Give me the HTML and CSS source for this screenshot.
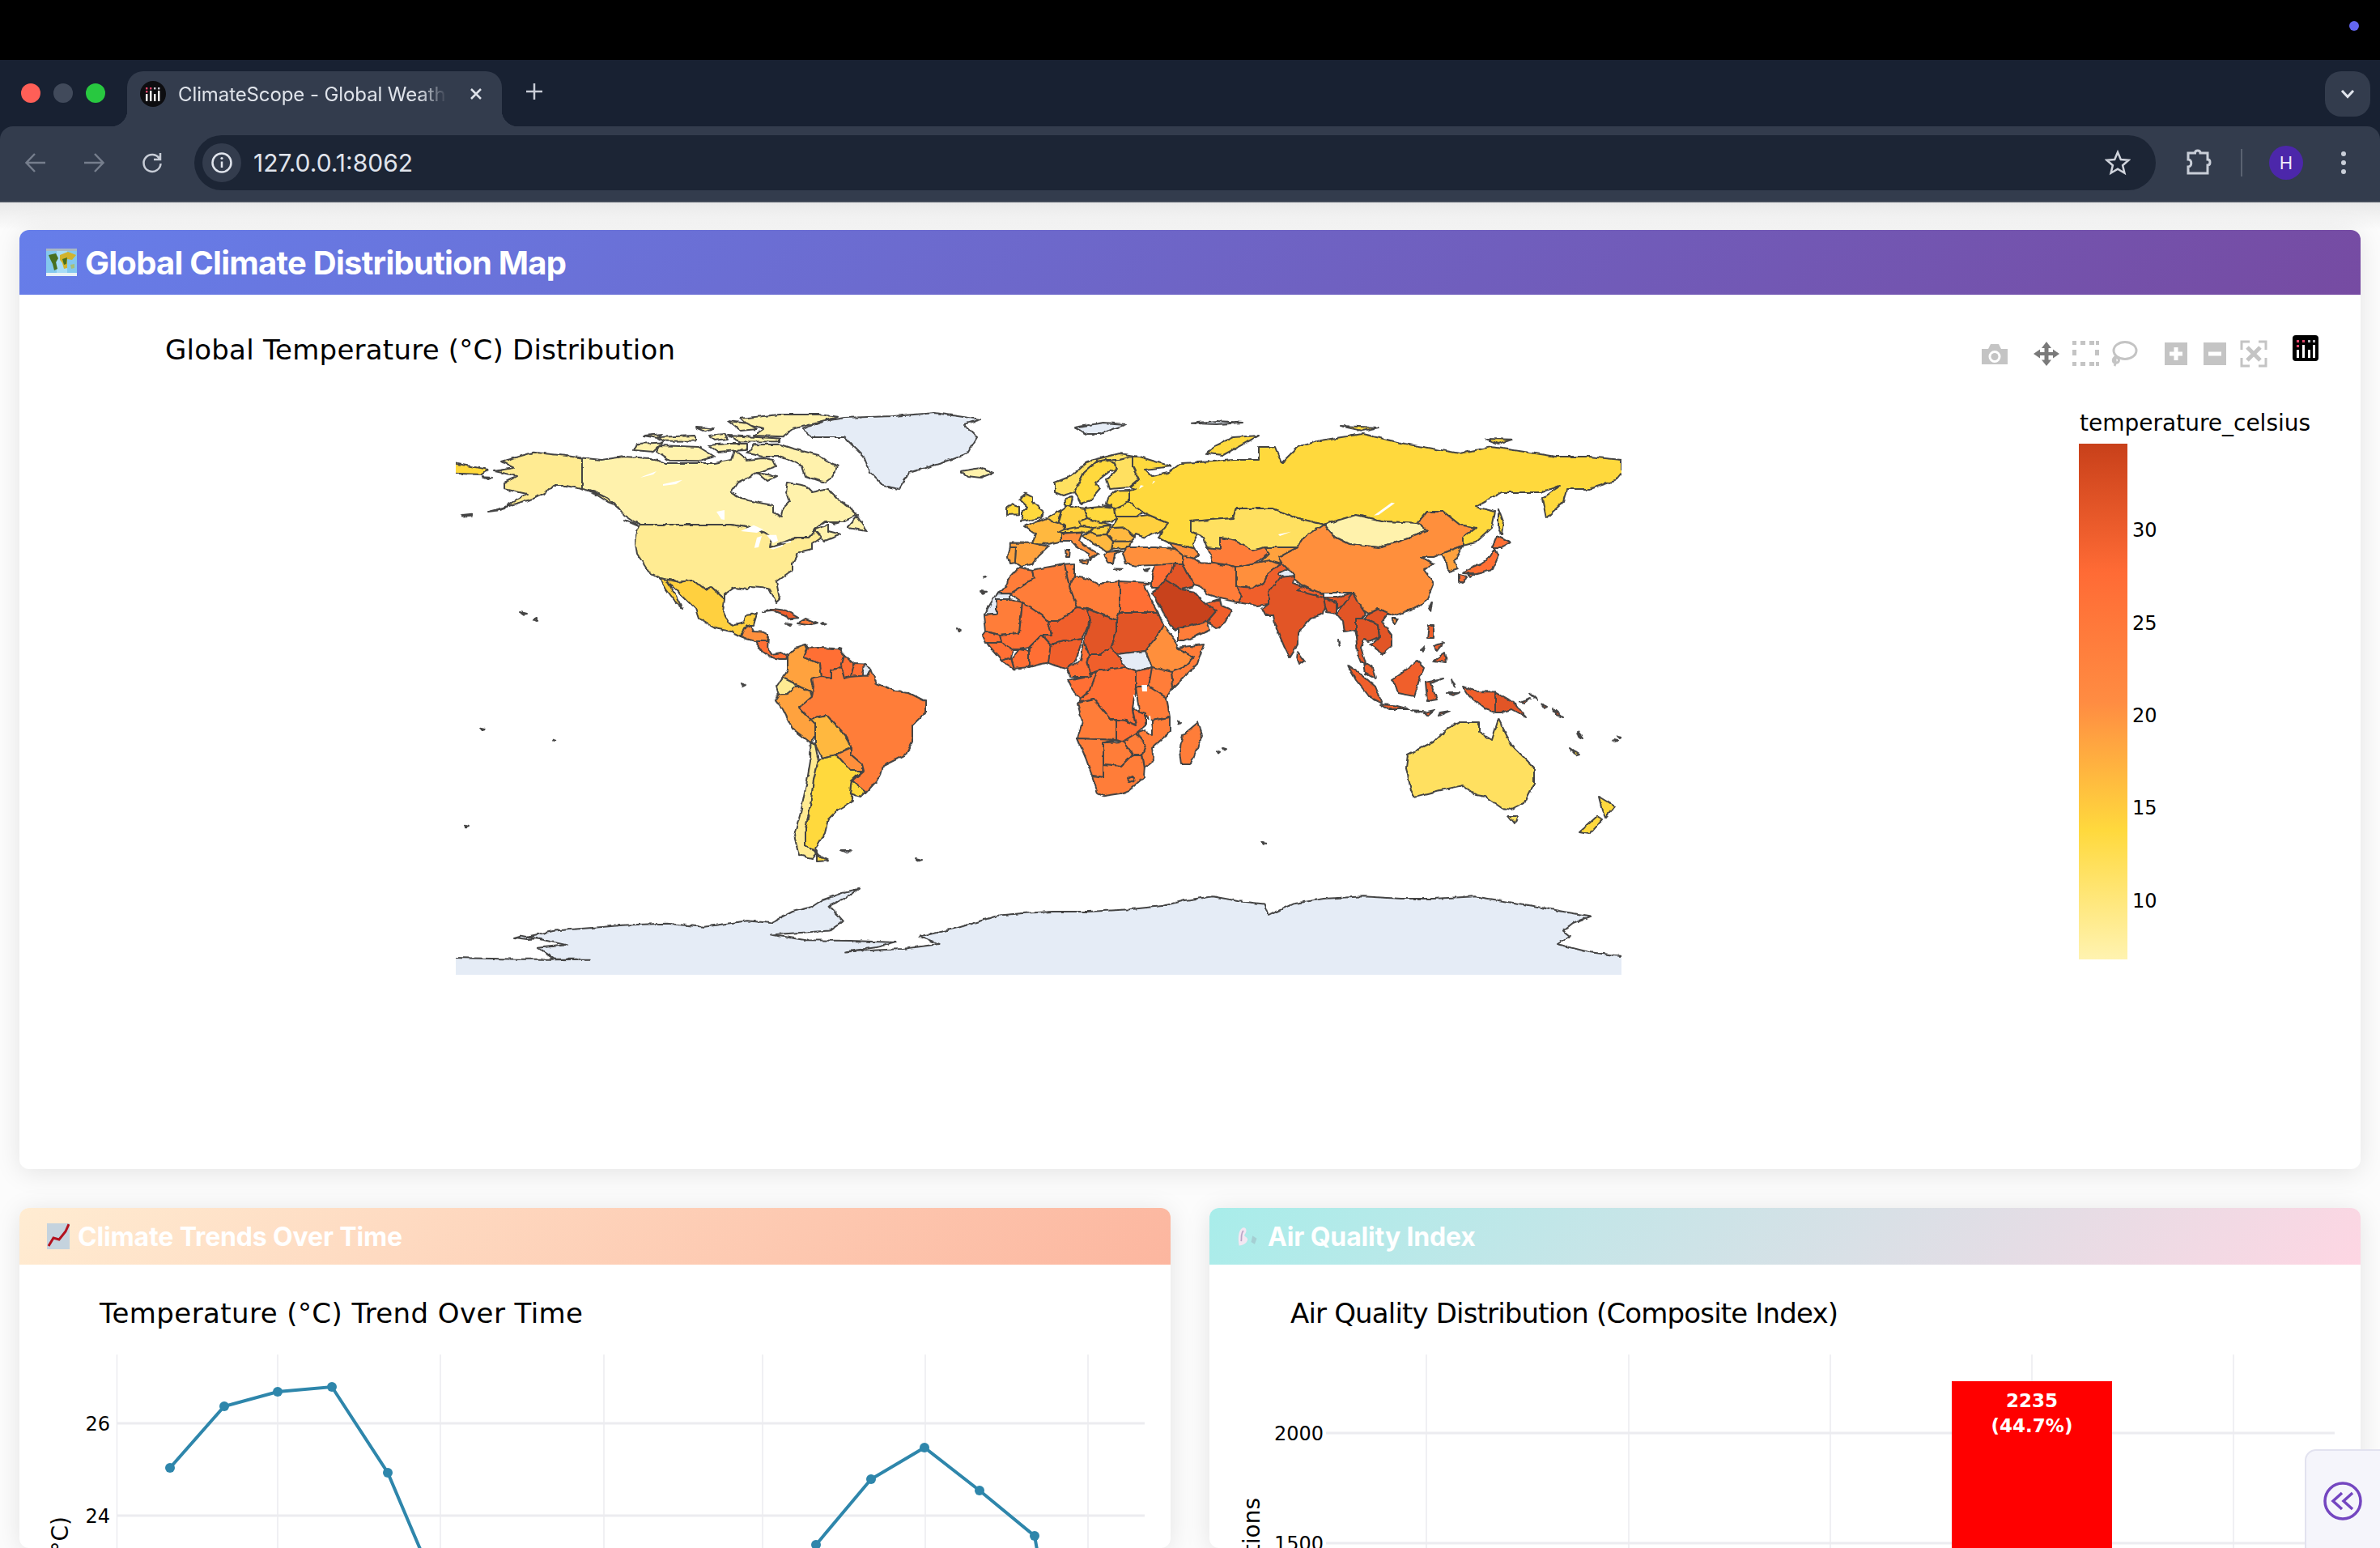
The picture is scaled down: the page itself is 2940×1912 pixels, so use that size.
FILE: index.html
```html
<!DOCTYPE html>
<html lang="en">
<head>
    <meta charset="UTF-8">
    <title>ClimateScope - Global Weather</title>
    <link rel="stylesheet" href="styles.css">
</head>
<body>

    <!-- macOS menu bar -->
    <div class="menubar"><span class="menu-dot"></span></div>

    <div class="browser-top">
        <!-- Browser tabs -->
        <div class="tabstrip">
            <div class="lights">
                <span class="light red"></span>
                <span class="light grey"></span>
                <span class="light green"></span>
            </div>
            <div class="tab">
                <svg class="favicon" viewBox="0 0 32 32">
                    <circle cx="16" cy="16" r="16" fill="#0d0d10"/>
                    <g fill="#e8466c"><rect x="7" y="8" width="2.4" height="2.4"/><rect x="7" y="12" width="2.4" height="2.4"/><rect x="12" y="8" width="2.4" height="2.4"/></g>
                    <g fill="#c9c9d2"><rect x="17" y="8" width="2.4" height="2.4"/><rect x="22" y="8" width="2.4" height="2.4"/></g>
                    <g fill="#fff"><rect x="7" y="16" width="2.4" height="9"/><rect x="12" y="12" width="2.4" height="13"/><rect x="17" y="16" width="2.4" height="9"/><rect x="22" y="12" width="2.4" height="13"/></g>
                </svg>
                <span class="tab-title">ClimateScope - Global Weath</span>
                <svg class="tab-close" viewBox="0 0 16 16"><path d="M2 2 14 14M14 2 2 14"/></svg>
            </div>
            <svg class="new-tab" viewBox="0 0 22 22"><path d="M11 1V21M1 11H21"/></svg>
            <div class="tab-menu">
                <svg viewBox="0 0 18 12"><path d="M2 2 9 9.5 16 2"/></svg>
            </div>
        </div>

        <!-- Browser toolbar -->
        <div class="toolbar">
            <svg class="nav-icon dim" viewBox="0 0 28 28"><path d="M26 14H3M13 3 2.500 14 13 25"/></svg>
            <svg class="nav-icon dim" viewBox="0 0 28 28"><path d="M2 14H25M15 3 25.500 14 15 25"/></svg>
            <svg class="nav-icon" viewBox="0 0 28 28"><path d="M23 9A10.500 10.500 0 1 0 24.500 15M24 2V10H16"/></svg>
            <div class="omnibox">
                <span class="site-chip">
                    <svg viewBox="0 0 28 28"><circle cx="14" cy="14" r="11.500"/><path d="M14 12.500V20"/><circle class="i-dot" cx="14" cy="8.500" r="1.600"/></svg>
                </span>
                <span class="url">127.0.0.1:8062</span>
                <svg class="star" viewBox="0 0 32 32"><path d="M16 3 19.800 12 29.500 12.800 22.100 19.200 24.400 28.700 16 23.600 7.600 28.700 9.900 19.200 2.500 12.800 12.200 12Z"/></svg>
            </div>
            <svg class="puzzle" viewBox="0 0 34 34"><path d="M4 5H12.500C12.500 1 19 1 19 5H28V13C32 13 32 20 28 20V30H4V22C9 22 9 13 4 13Z"/></svg>
            <span class="divider"></span>
            <span class="avatar">H</span>
            <span class="kebab"><i></i><i></i><i></i></span>
        </div>
    </div>

    <div class="page">

        <section class="card">
            <h2 class="card-head head-map">
                <svg class="emoji" viewBox="0 0 40 36">
                    <rect x="1" y="1" width="38" height="34" fill="#84c8ee"/>
                    <rect x="14" y="1" width="13" height="34" fill="#a8dcf6"/>
                    <rect x="1" y="1" width="38" height="3" fill="#a9b9c4"/>
                    <rect x="1" y="31" width="38" height="4" fill="#e9f1f5"/>
                    <path d="M4 9 13 7 16 13 13 18 15 26 11 28 9 20 6 14Z" fill="#48701f"/>
                    <path d="M18 9 28 5 38 9 33 15 27 14 27 25 23 26 21 19 18 15Z" fill="#d2b32c"/>
                    <path d="M21 14 27 12 26 20 23 21Z" fill="#48701f"/>
                    <path d="M31 21 36 20 36 25 32 26Z" fill="#a8bf78"/>
                </svg>
                Global Climate Distribution Map
            </h2>
            <svg class="plot-map" viewBox="24 364 2892 1080">
                <text class="plot-title" x="204" y="444" textLength="630">Global Temperature (°C) Distribution</text>

                <!-- Plotly mode bar -->
                <g class="mode-off">
                    <path d="M2448 431H2456L2459 425H2469L2472 431H2480V450H2448ZM2464 433A7.500 7.500 0 1 0 2464 448A7.500 7.500 0 1 0 2464 433Z" fill-rule="evenodd"/>
                    <circle cx="2464" cy="440.500" r="4.500"/>
                </g>
                <path class="mode-on" d="M2528 422 2534 430H2530.500V435H2536V431.500L2544 437 2536 442.500V439H2530.500V444.500H2534L2528 452 2522 444.500H2525.500V439H2520V442.500L2512 437 2520 431.500V435H2525.500V430H2522Z"/>
                <g class="mode-off">
                    <rect x="2560" y="421" width="5" height="5"/><rect x="2570" y="421" width="6" height="5"/><rect x="2581" y="421" width="6" height="5"/><rect x="2589" y="421" width="4" height="5"/>
                    <rect x="2560" y="432" width="5" height="7"/><rect x="2588" y="432" width="5" height="7"/>
                    <rect x="2560" y="447" width="5" height="5"/><rect x="2570" y="447" width="6" height="5"/><rect x="2581" y="447" width="6" height="5"/><rect x="2589" y="447" width="4" height="5"/>
                </g>
                <g class="mode-line">
                    <ellipse cx="2625" cy="433" rx="14" ry="10.500"/>
                    <path d="M2614 440C2608 444 2610 449 2615 448C2619 447 2618 441 2613 442C2612 446 2615 447 2612 452"/>
                </g>
                <path class="mode-off" fill-rule="evenodd" d="M2674 423H2702V451H2674ZM2685.500 429V434.500H2680V439.500H2685.500V445H2690.500V439.500H2696V434.500H2690.500V429Z"/>
                <path class="mode-off" fill-rule="evenodd" d="M2722 423H2750V451H2722ZM2728 434.500V439.500H2744V434.500Z"/>
                <g class="mode-line">
                    <path d="M2769 432V422H2779M2790 422H2799V432M2769 442V452H2779M2790 452H2799V442"/>
                    <path class="mode-thick" d="M2776 429 2792 445M2792 429 2776 445"/>
                </g>
                <rect x="2832" y="414" width="32" height="32" rx="4" fill="#000"/>
                <g fill="#e8466c"><rect x="2837" y="420" width="3" height="3"/><rect x="2837" y="426" width="3" height="3"/><rect x="2844" y="420" width="3" height="3"/></g>
                <g fill="#b9b9c0"><rect x="2851" y="420" width="3" height="3"/><rect x="2857" y="420" width="3" height="3"/></g>
                <g fill="#fff"><rect x="2837" y="432" width="3" height="10"/><rect x="2844" y="426" width="3" height="16"/><rect x="2851" y="432" width="3" height="10"/><rect x="2857" y="426" width="3" height="16"/></g>

                <!-- Choropleth, drawn in lon/lat -->
                <svg x="563" y="504" width="1440" height="700" viewBox="-180 -85 360 175">
                    <defs>
                        <!-- roughens the hand drawn coastlines -->
                        <filter id="coast" filterUnits="userSpaceOnUse" x="-190" y="-95" width="380" height="195" color-interpolation-filters="sRGB">
                            <feTurbulence type="fractalNoise" baseFrequency="0.45" numOctaves="2" seed="4" result="noise"/>
                            <feDisplacementMap in="SourceGraphic" in2="noise" scale="1.1" xChannelSelector="R" yChannelSelector="G"/>
                        </filter>
                    </defs>
                    <g filter="url(#coast)">
                    <g class="geo" transform="scale(1 -1)">
                        <!-- Antarctica and Greenland -->
                        <polygon class="t-none" points="-186,-84.600 -160,-85.200 -138.500,-85.200 -149.400,-85.300 -154.800,-81.700 -145.800,-80.800 -157.900,-78.200 -149.400,-76.400 -138,-75.500 -127.600,-74.600 -115,-74.200 -103.300,-75.200 -90,-73.300 -82.700,-74 -76,-70.500 -70,-69 -67,-67 -60,-64.500 -55.500,-63.400 -60,-66.500 -64.600,-68.700 -60.300,-73.400 -64.600,-76.400 -82.700,-77.600 -71.800,-79.300 -58,-79.500 -44,-80 -50,-81.500 -59.700,-82.900 -42,-82 -30.600,-80.500 -36.700,-78.200 -25,-75.500 -12.500,-71.700 -5,-71 4.300,-70.500 15.400,-70.500 28,-69.800 38.700,-68.700 45,-67 53.800,-65.800 62,-67.300 69.600,-68.100 71,-71.700 78.500,-68.100 88,-66.500 100.400,-65.800 112,-66.500 122,-66.500 134.700,-65.800 145,-67.500 152.500,-68.700 162,-70.500 170.400,-71.900 165,-74 162,-76.400 164,-78 160,-80.500 170,-83 186,-85 186,-98 -186,-98"/>
                        <polygon class="t-none" points="-162,-78.500 -158,-79 -155,-78.800 -160,-77.900"/>
                        <polygon class="t-none" points="-73,78.500 -66,81 -60,82 -45,82.500 -32,83.500 -18,81.500 -23,80 -19,76 -22,71 -30,68 -40,65 -43,60 -48,61 -52,65 -54,70 -60,76 -70,76"/>
                        <polygon class="t-none" points="11,79 20,80.500 27,80 19,77 15,77"/>
                        <polygon class="t-none" points="47,80.300 55,81 63,80.500 55,80"/>

                        <!-- North America -->
                        <polygon class="t1" points="-141,69.600 -135,69 -128,70 -120,69.500 -115,68 -108,68 -100,68 -95,69 -94,72 -90,69 -85,69.500 -82,69 -81,67 -87,65 -93,62 -95,59 -92,57 -85,55.500 -82,55 -82,52.500 -79.500,51.500 -79,54 -77,56 -78,59 -77.500,62 -72,61 -70,59 -65,60 -62,57 -58,54 -56,52 -60,50 -66,50 -70,47 -65,49 -65,47 -61,46 -66,44 -67,45 -69,47.300 -71,45 -75,45 -79,43.500 -83,42 -82.500,45 -84.500,46.500 -89,48 -95,49 -123,49 -125,50 -128,52 -130,54.500 -133,57 -137,59 -141,60"/>
                        <polygon class="t1" points="-118,71.500 -117,73.500 -105,73 -100,70 -105,68.700 -114,68.800"/>
                        <polygon class="t1" points="-62,67 -66,69 -68,70.500 -76,72.500 -80,73.800 -88,73.700 -90,71 -85,70 -80,70 -77,69 -73,67 -72,64 -66,62 -64,63.500"/>
                        <polygon class="t1" points="-62,82.300 -68,83 -80,83 -92,81.800 -90,80 -85,78.500 -88,76.500 -79,76.200 -76,78.500 -66,81"/>
                        <polygon class="t1" points="-125,72 -124,74 -116,74.400 -119,71.500"/>
                        <polygon class="t1" points="-96,76.500 -80,75.600 -80,74.700 -92,74.600"/>
                        <polygon class="t1" points="-118,76 -106,76.500 -106,74.900 -116,74.800"/>
                        <polygon class="t1" points="-96,81 -90,80.300 -87,78.500 -92,78"/>
                        <polygon class="t1" points="-102,76.500 -97,77 -96,75.500 -100,75"/>
                        <polygon class="t1" points="-122,76.500 -116,77 -118,75.800"/>
                        <polygon class="t1" points="-106,79 -100,78.700 -103,77.700"/>
                        <polygon class="t1" points="-102,73.500 -96,74 -90,74 -90,72 -95,71.800 -99,71.500"/>
                        <polygon class="t1" points="-87,65 -81,64 -84,62.500"/>
                        <polygon class="t1" points="-59,48 -56,51.500 -53,47"/>
                        <polygon class="t1" points="-128,50.500 -123.500,48.500 -125,49.500"/>
                        <polygon class="t1" points="-64.500,49.900 -62,49.600 -63,49.300"/>
                        <polygon class="t2" points="-141,69.600 -148,70.500 -156,71.300 -166,68.500 -162,66.500 -168,65.500 -161,64 -165,62 -165,60 -158,58.500 -165,54.500 -156,57 -152,59 -150,61 -146,61 -141,60 -137,58.500 -133,56 -130.500,55 -133,57 -137,59 -141,60"/>
                        <polygon class="t2" points="-170,53 -166,54 -163,55 -166,53.500"/>
                        <polygon class="t2" points="-178,52 -175,52.300 -175,51.800 -178,51.600"/>
                        <polygon class="t2" points="-172,63.700 -169,63.500 -170,63"/>
                        <polygon class="t2" points="-155,20 -155,19 -156,19.500"/>
                        <polygon class="t2" points="-160,22 -158,21.500 -159,21.300"/>
                        <polygon class="t2" points="-123,49 -95,49 -89,48 -84.500,46.500 -82.500,45 -83,42 -79,43 -75,45 -71,45 -69,47.300 -67,45 -70,43 -70,41.500 -74,40.500 -76,37 -76,35 -81,31.500 -80,26 -81,25 -83,29 -85,29.700 -89,30 -90,29 -94,29.500 -97,27.500 -97,26 -101,29.700 -103,29 -106.500,31.800 -111,31.300 -117,32.500 -120.500,34.500 -124,40 -124.500,43 -124,47"/>
                        <polygon class="t5" points="-117,32.500 -111,31.300 -106.500,31.800 -103,29 -101,29.700 -97,26 -97.500,22 -96,19 -94,18 -91,18.700 -90.500,21 -87,21.500 -88,18 -89,18 -91,17 -92,14.500 -95,16 -100,17 -105,20 -106,23 -109,26 -112.500,29.500 -114.700,31.500 -112,27 -110,23 -112,25 -115,29"/>
                        <polygon class="t8" points="-92,14.500 -91,17 -89,18 -88,16 -85,15.800 -83.500,15 -84,13 -87.500,13 -90,13.700"/>
                        <polygon class="t10" points="-87.500,13 -84,13 -83.500,15 -83.700,11 -82.500,9 -79.500,9.500 -77.500,8.500 -78,7.500 -80,7.500 -83,8.200 -85.500,10"/>
                        <polygon class="t11" points="-85,22 -82,23 -78,22.500 -74.200,20.200 -77.500,19.900 -78,20.700 -82,22.300"/>
                        <polygon class="t9" points="-74.500,18.500 -72,20 -68.500,18.700 -71,18"/>
                        <polygon class="t8" points="-78.300,18.400 -76.300,18.200 -77,17.700"/>
                        <polygon class="t8" points="-67.200,18.500 -65.600,18.300 -66.500,18"/>
                        <polygon class="t8" points="-61.800,11 -60.800,10.700 -61.500,10"/>

                        <!-- South America -->
                        <polygon class="t7" points="-77.500,8.500 -75,11 -72,12 -71.300,11 -72.500,8 -70,7 -67.500,6 -67,2 -70,1.500 -69.500,-1 -70,-4.200 -70.500,-2.500 -74,-1 -75.500,0 -79,1.700 -77.500,4"/>
                        <polygon class="t10" points="-72,12 -71.500,10.800 -68,11 -62,10.700 -60,8.500 -61,5 -64,4 -64,1.500 -67,2 -67.500,6 -70,7 -72.500,8 -71.300,11"/>
                        <polygon class="t10" points="-60,8.500 -57,6 -58,2 -60,1.500 -61,5"/>
                        <polygon class="t10" points="-57,6 -54,5.900 -54.500,2.300 -58,2"/>
                        <polygon class="t-none" points="-54,5.900 -51.700,4.300 -52.700,2.300 -54.500,2.300"/>
                        <polygon class="t2" points="-79,1.700 -75.500,0 -75.200,-1 -78,-3.300 -80.300,-3.400 -81,-1"/>
                        <polygon class="t7" points="-80.300,-3.400 -78,-3.300 -75.200,-1 -74,-1 -70.500,-2.500 -70,-4.200 -73,-7 -73,-9 -70.500,-9.500 -69,-12.500 -69,-16 -70.400,-18.300 -76,-14 -79,-8 -81.300,-5"/>
                        <polygon class="t9" points="-51.700,4.300 -50,0 -44,-2.500 -40,-3 -35,-5.500 -35,-9 -39,-13 -39,-18 -41,-22 -48,-25.500 -49,-29 -53.500,-34 -57.500,-30 -54,-27 -54.500,-25 -58,-22 -58,-19.500 -60,-16 -65.300,-10 -70.500,-11 -74,-7.500 -70,-4.200 -69.500,-1 -70,1.500 -67,2 -64,1.500 -64,4 -61,5 -60,1.500 -58,2 -54.500,2.300 -52.700,2.300"/>
                        <polygon class="t6" points="-69,-12.500 -70.500,-11 -65.300,-10 -60,-16 -58,-19.500 -58,-20 -62.500,-22 -67,-23 -69,-19 -69,-16"/>
                        <polygon class="t8" points="-58,-20 -62.500,-22 -58,-27 -54.500,-27 -54.500,-25 -58,-22"/>
                        <polygon class="t4" points="-57.800,-30.200 -53.500,-33.500 -55,-35 -58.300,-34"/>
                        <polygon class="t2" points="-70.400,-18.300 -69,-19 -68,-24 -69.500,-30 -70.500,-38 -72,-45 -72,-50 -68.500,-52.300 -70,-54 -74,-53 -75.500,-47 -73.500,-40 -71.500,-30 -70.500,-24"/>
                        <polygon class="t4" points="-67,-23 -62.500,-22 -58,-27 -54.500,-27 -57.800,-30.200 -58.300,-34 -57,-36 -62,-39 -65,-42 -66,-46 -69,-51 -68.500,-52.300 -72,-50 -72,-45 -70.500,-38 -69.500,-30 -68,-24"/>
                        <polygon class="t4" points="-68.500,-52.700 -65,-54.800 -68.500,-55"/>
                        <polygon class="t-none" points="-61,-51.500 -58,-51.500 -59,-52.300"/>
                        <polygon class="t-none" points="-38,-54 -36,-54.500 -37,-54.800"/>
                        <polygon class="t-none" points="-92,0 -90.500,-.5 -91.500,-1"/>

                        <!-- Europe -->
                        <polygon class="t1" points="-24,65.500 -18,66.500 -14,65 -18,63.500 -22,64"/>
                        <polygon class="t4" points="-5.500,50 1,51 1.500,53 -2,56 -2,57.500 -4,58.600 -6,57 -3.500,54.500 -5,53 -5,51.700"/>
                        <polygon class="t4" points="-10,52 -6,52.200 -6,54.500 -8,55.200 -10,54"/>
                        <polygon class="t3" points="5,59 7.500,58 11,59 12,61 14,65 18,68.500 25,69 31,70 25,71 15,68.500 10,64 5,62"/>
                        <polygon class="t4" points="11,59 13,55.500 16,56.500 19,60 17.500,62 22,65.500 24,66 23.500,68 20.500,69 18,68.500 14,65 12,61"/>
                        <polygon class="t3" points="22,60 28,60.500 31,63 29,67 29,70 25,69 20.500,69 23.500,68 24,66 21,63"/>
                        <polygon class="t4" points="8.200,55 8.200,57 10.500,57.500 10,55"/>
                        <polygon class="t7" points="-8.800,43.400 -2,43.300 3,42.300 0,39.500 -2,36.800 -5.500,36 -7.300,37.200 -7,42 -8.800,42"/>
                        <polygon class="t7" points="-8.800,42 -7,42 -7.300,37.200 -9,37 -9.500,39"/>
                        <polygon class="t6" points="-4.500,48.500 2.500,51 8,49 7.500,44 3,43 -2,43.300 -1,46"/>
                        <polygon class="t5" points="2.500,51 4,52 7,53.500 6,50 6,49.500 4,50"/>
                        <polygon class="t5" points="7,53.500 9,55 14,54 15,51 12.500,48 8,47.500 8,49 6,50"/>
                        <polygon class="t4" points="14,54 19,54.500 23.500,54 24,50.500 19,49.300 15,51"/>
                        <polygon class="t5" points="12.500,50 15,51 19,49.500 22.500,49 18,47.800 13,48.600"/>
                        <polygon class="t5" points="6,46.500 8,47.500 13,48.500 17,48 16,46.700 10,46.500"/>
                        <polygon class="t8" points="7,44 7,46 13.500,46.500 12.500,44 16,41.500 18.500,40 16.500,39 16,38 15.500,40 12,42 10,44"/>
                        <polygon class="t8" points="12.500,38 15.500,38.200 15,36.800"/>
                        <polygon class="t8" points="8.300,41 9.700,41 9.500,39 8.500,39"/>
                        <polygon class="t5" points="16,46.700 17,48 22,48.500 21,46 18,45.800"/>
                        <polygon class="t6" points="21,46 22.500,48 26.500,48.200 29.700,45 28.500,43.800 23,43.800"/>
                        <polygon class="t6" points="23,43.800 28.500,43.800 28,42 22.500,41.300"/>
                        <polygon class="t6" points="13.500,45.500 16,46.700 18,45.800 21,46 23,43.800 22.500,41.300 21,40.500 19.500,41.700 16,43.500"/>
                        <polygon class="t8" points="20,39.700 21,40.500 26,41 23.500,40 23,37 21.500,37"/>
                        <polygon class="t8" points="23.500,35.400 26,35.300 24.500,34.900"/>
                        <polygon class="t8" points="32.500,35 34.500,35.500 33.500,34.600"/>
                        <polygon class="t5" points="24,51.500 30,51.500 34,52 40,49.500 38,47 35,46 33,45 30,46 29.700,45.300 26.500,48.200 22.500,48 24,50.500"/>
                        <polygon class="t4" points="23.500,54 28,56 32,53 30,51.500 24,51.500"/>
                        <polygon class="t4" points="21,55.500 21.500,57.500 24,59.400 28,59.500 28,56 23.500,54"/>

                        <!-- Russia -->
                        <polygon class="t4" points="28,59.500 30,60 28.500,60.500 31,63 29,67 29,70 31,70 41,67 33,66 35,64 40,65 44,68 54,68.500 60,69 68,69 68,73 73,73 75,68 80,73 87,75 100,77 113,74 130,71 140,73 160,70 170,70 180,69 180,65 178,62.500 170,60 163,60 162,56 156.700,51 155.500,57 161,61 155,59 143,59 135,54.500 141,53 140,48 135,43.500 131,42.500 131,45 135,48 130,49 125,53 120,53 117,49.500 107,50 98,52 88,49 80,51 72,54 61,54 60,51 47,50 47,47 49,46 47.500,43 48,41.700 40,43.500 37,45 38,47 40,49.500 34,52 32,53 28,56"/>
                        <polygon class="t4" points="-186,69 -170,66 -172,64.500 -186,65"/>
                        <polygon class="t4" points="52,71 57,70.500 68,76.500 60,76 54,73"/>
                        <polygon class="t4" points="142,54 143.500,50 143,46 142,48"/>
                        <polygon class="t4" points="93,79.500 105,79 100,78"/>
                        <polygon class="t4" points="138,75.500 146,75.300 142,74"/>
                        <polygon class="t4" points="20,54.900 22.500,55 22,54.400"/>

                        <!-- Middle East and Asia -->
                        <polygon class="t3" points="47,50 60,51 61,54 72,54 80,51 88,49 82,45 80,42 70,42 66,41 61,44 56,45 56,41.500 52,42 51,45 49,46 47,47"/>
                        <polygon class="t1" points="88,49 98,52 107,50 117,49.500 120,47 112,44 105,42 96,43 91,45.500"/>
                        <polygon class="t8" points="74,39 80,42 82,45 88,49 91,45.500 96,43 105,42 112,44 120,47 117,49.500 120,53 125,53 130,49 135,48 131,45 131,42.500 124.500,40 122,39 118,39 122,37 119,35 122,31 120,26 117,23.500 110,21 108,21.700 105,23 102,21.500 98,24 97,28 92,28 86,28 81,30.500 78,33 75,36"/>
                        <polygon class="t8" points="109,20 111,20 110,18.300"/>
                        <polygon class="t7" points="124.500,40 131,42.500 128.500,38 129.500,35.500 126.500,34.500 126,37"/>
                        <polygon class="t10" points="131,34 135,33.700 140,35 142,39.500 141,41.500 139.500,39 136.500,37 133,35.500"/>
                        <polygon class="t10" points="140,42 141.500,45.500 145.500,43.500 143,42"/>
                        <polygon class="t10" points="130,33.500 132,33 131,31 130,31.500"/>
                        <polygon class="t10" points="132.500,34 134.500,34 133,33"/>
                        <polygon class="t10" points="120.500,23 121.500,25 121,22"/>
                        <polygon class="t9" points="52,42 56,41.500 56,45 61,44 66,41 70,42 71,40 67,37.200 61,36 53.800,37.300 53,40"/>
                        <polygon class="t7" points="70,42 80,42 74,39 75,37 68,37 71,40"/>
                        <polygon class="t8" points="40,43.500 48,41.700 49.500,40 48,38.500 44.500,39.500 42,41.500"/>
                        <polygon class="t8" points="26,40 27,42 36,42 42,41.500 44.500,39.500 44.500,37 36,36.500 30,36.300 27,37"/>
                        <polygon class="t9" points="44.500,39.500 48,38.500 50,37.200 54,37 61,36 61,31 63,27 61.500,25 57,26 52,27.500 50,30 48,30.500 46,34 44.500,37"/>
                        <polygon class="t12" points="42,37 44.500,37 46,34 48,30.500 47.500,29.800 44,29 39,32 41,34.500"/>
                        <polygon class="t10" points="36,36.500 42,37 41,34.500 39,32 37,29.500 35,29.500 35,33"/>
                        <polygon class="t13" points="35,28 37,29.500 39,32 44,29 48,28.300 50,26 51.500,24.500 55,22.500 52,19 46,17.500 43,17 42,16.500 39,21 36.500,25.500"/>
                        <polygon class="t11" points="51.500,24.500 56,25.800 56.500,24 59.800,22.500 57.500,18.800 55,17 52,19 55,22.500"/>
                        <polygon class="t9" points="43,13 43,17 46,17.500 52,19 53,16.500 45,13"/>
                        <polygon class="t8" points="61,36 67,37.200 71.500,38 75,37 71,34 69.500,31 66,29.500 61,30"/>
                        <polygon class="t11" points="61,30 66,29.500 69.500,31 71,34 75,37 77,35 74.500,32 71,28 71,24.500 67.500,24 61.500,25 63,27"/>
                        <polygon class="t-none" points="74,34 77,35.500 79,33 76,32.200"/>
                        <polygon class="t12" points="74.500,32.500 79,33 78.500,31 81,30 88,26.500 92,26.500 97,28 94,24 92,23 92,25 89,26 88,21.500 84,20 80,15.500 80,12 77.500,8 76,11 73,18 72.500,21 70,21 69,23 71,24.500 71,28"/>
                        <polygon class="t11" points="81,30 88,27.700 88,26.500 80,28.500"/>
                        <polygon class="t12" points="88,26 92,25 92,21.500 89,22"/>
                        <polygon class="t11" points="80,9.700 82,7 80.500,6 79.800,8"/>
                        <polygon class="t12" points="92,21.500 94,24 97,28 98.500,25 101,21.500 98,18 98.500,12 97.500,16.500 94.500,16 94,19"/>
                        <polygon class="t12" points="98,20 100.500,20 105,18 105.500,14.500 102,13 100.500,13.500 99.500,11 101,6.500 99.500,6.500 98.500,9 98,15"/>
                        <polygon class="t12" points="102,21.500 105,23 108,21.700 106,19 109,15 109,11.500 106,9 105,10.300 102.500,12 105.500,14.500 105,18 100.500,20"/>
                        <polygon class="t11" points="100.500,6.500 103,5 104,1.500 101,3"/>
                        <polygon class="t11" points="109,1 112,3 117,7 119,5 117.500,1 116,-4 111,-3 110,0"/>
                        <polygon class="t11" points="95.500,5.500 100,2.500 104,-1 106,-6 102,-4 98,1"/>
                        <polygon class="t11" points="105.500,-6.500 110,-6.800 114.500,-8 108,-8"/>
                        <polygon class="t11" points="115,-8.300 119,-8.500 117,-9"/>
                        <polygon class="t11" points="119,-9 122,-8.300 120,-10"/>
                        <polygon class="t11" points="119.500,0.500 125,1.500 121,0 123,-5 120,-5.500"/>
                        <polygon class="t11" points="123.500,-10 127,-8.500 124,-9"/>
                        <polygon class="t11" points="127.500,1.500 128.500,-1 128,-.5"/>
                        <polygon class="t11" points="126,-3 130,-3 128,-3.700"/>
                        <polygon class="t11" points="131,-1 135,-2.500 141,-2.600 141,-9 138,-8 133,-4"/>
                        <polygon class="t12" points="141,-2.600 147,-6 150.500,-10.500 146,-8 143,-9 141,-9"/>
                        <polygon class="t12" points="148.500,-5.700 152,-4.500 150,-6"/>
                        <polygon class="t12" points="153,-4 154,-5 151.500,-3"/>
                        <polygon class="t12" points="155,-6.500 157,-7.500 156,-8"/>
                        <polygon class="t12" points="159,-8 162,-10.500 160,-9.800"/>
                        <polygon class="t11" points="120.500,18 122,18 122,14 120,14"/>
                        <polygon class="t11" points="122,7 125.500,9.500 126,6.500"/>
                        <polygon class="t11" points="122,11.500 125,12.500 123,10"/>
                        <polygon class="t11" points="118,10 119,11.500 118.500,9.800"/>
                        <polygon class="t3" points="114,-22 122,-18 126,-14 130,-12 136,-12 136,-15 140,-17.500 142,-11 146,-19 153,-26 153,-31 150,-37 146,-39 143,-38.500 138,-35 135,-34.500 131,-31.500 124,-33 116,-35 115,-33 113.500,-26"/>
                        <polygon class="t3" points="145,-41 148,-41 147,-43.500"/>
                        <polygon class="t4" points="173,-35 178,-38 175,-41.500 174,-39"/>
                        <polygon class="t4" points="172.500,-41 174,-42 170,-46.500 167,-46"/>
                        <polygon class="t4" points="164,-20 167,-22 166,-22.300"/>
                        <polygon class="t4" points="166.500,-15 168,-17 167,-16.500"/>
                        <polygon class="t4" points="177.500,-17.500 179,-17.800 178,-18.200"/>
                        <polygon class="t4" points="179,-16.500 180,-16.700 179.500,-17"/>

                        <!-- Africa -->
                        <polygon class="t9" points="-13,27.700 -8.700,27.700 -5,30 -1.500,32.500 -2,35 -6,35.800 -9.500,32 -10,29.500"/>
                        <polygon class="t-none" points="-17,21 -13,21.300 -13,26 -8.700,26 -8.700,27.700 -13,27.700"/>
                        <polygon class="t9" points="-17,21 -13,21.300 -13,26 -8.700,26 -5,25 -6,15.500 -12,15 -16.500,16"/>
                        <polygon class="t9" points="-8.700,27.700 -5,25 1,21 3,19 6,19 12,23.500 9.500,30 8,36.800 -2,35 -1.500,32.500 -5,30"/>
                        <polygon class="t9" points="8,36.800 11,37 11,33 9.500,30"/>
                        <polygon class="t9" points="9.500,30 12,23.500 15,23 24,19.500 25,22 25,31.500 20,31 19,30.300 15,32.300 11,33"/>
                        <polygon class="t10" points="25,22 36.800,22 34,27 32.500,30 34.500,31 25,31.500"/>
                        <polygon class="t10" points="-12,15 -6,15.500 -5,25 1,21 3,19 4,15 1,15 -3,11 -6,10.500 -8,10.500 -11.500,12.500"/>
                        <polygon class="t11" points="3,19 6,19 12,23.500 15,23 16,19.500 13.500,13.700 8,13 3.700,12 1,15 4,15"/>
                        <polygon class="t12" points="15,23 24,19.500 24,16 22.500,11 19,9 15.500,9 14,13 16,19.500"/>
                        <polygon class="t12" points="24,19.500 25,22 36.800,22 38.500,18 36.500,14.500 33,10 24,9 22.500,11 24,16"/>
                        <polygon class="t-none" points="24,9 33,10 35,5 30,3.700 26,5"/>
                        <polygon class="t8" points="36.500,14.500 38.500,18 43,12 42.500,11 48,8 45,5 41.500,3.500 39,3.500 35,5 33,10"/>
                        <polygon class="t9" points="42.500,11 51,12 49,6 41.500,-1.500 41,3.500 45,5 48,8"/>
                        <polygon class="t9" points="35,5 41,3.500 41.500,-1.500 39.500,-4.500 34,-1 34.500,4"/>
                        <polygon class="t10" points="30,3.700 35,5 34,-1 30,-1"/>
                        <polygon class="t9" points="30,-1 34,-1 39.500,-4.500 40.500,-10.500 35,-11.500 31,-8.500"/>
                        <polygon class="t10" points="12.500,-6 17,-5 22,-11 27,-11.500 30,-13 29,-8 30,-1 30,3.700 26,5 19,4 17,3.500 16,-2 13,-4.700"/>
                        <polygon class="t11" points="15,7 15.500,9 19,9 22.500,11 24,9 27,5 19,4 16,3"/>
                        <polygon class="t10" points="9,1 14,2 16,3 18,3.500 16,-2 13,-4.700 11,-3"/>
                        <polygon class="t10" points="8.500,4.500 13,7 14,13 15.500,9 15,7 16,2 9.800,2"/>
                        <polygon class="t11" points="2.700,6.400 3.700,12 8,13 13.500,13.700 11.500,7 8.500,4.500 5,5.500"/>
                        <polygon class="t10" points="-3,5 1,6 3,6.400 3.700,12 1,15 -3,11"/>
                        <polygon class="t10" points="-8,4.500 -3,5 -3,10 -6,10.500 -8,8"/>
                        <polygon class="t10" points="-11.500,7 -7.500,4.400 -8.500,8"/>
                        <polygon class="t10" points="-15,11 -11.500,7 -8.500,8 -8,10.500 -11.500,12.500 -16,12.500"/>
                        <polygon class="t10" points="-17.500,14.700 -16.500,16 -12,15 -11.500,12.500 -16.500,12.500"/>
                        <polygon class="t9" points="12,-6 12.500,-6 17,-5 22,-11 24,-11 24,-17.500 12,-17 13.500,-12"/>
                        <polygon class="t10" points="22,-11 27,-11.500 30,-13 29,-8 33,-9.500 33,-13 30,-15.500 26,-18 24,-17.500 24,-11"/>
                        <polygon class="t9" points="35,-11.500 40.500,-10.500 40.500,-15 35,-20 35.500,-24 32.700,-26 32,-22 33,-19 30,-15.500 33,-14.500 35,-16"/>
                        <polygon class="t9" points="26,-18 30,-15.500 33,-19 32,-22 29,-22"/>
                        <polygon class="t9" points="20,-18.300 26,-18 29,-22 25.500,-25.500 20,-25"/>
                        <polygon class="t9" points="12,-17 24,-17.500 20,-18.300 20,-29 16.500,-28.500 14.500,-23"/>
                        <polygon class="t9" points="16.500,-28.500 20,-29 20,-25 25.500,-25.500 29,-22 32,-22 32.700,-26 32.500,-29 28,-33 25.500,-34 20,-34.800 18.300,-34"/>
                        <polygon class="t9" points="27.500,-29.500 29,-28.700 29.400,-30 28,-30.500"/>
                        <polygon class="t9" points="49.300,-12 50.500,-16 47,-25 44,-25 43.500,-21 44.500,-16"/>

                        <!-- Small islands -->
                        <polygon class="t9" points="-18,28.500 -16,28.300 -17,27.800"/>
                        <polygon class="t9" points="-17,32.900 -16.200,32.800 -16.800,32.400"/>
                        <polygon class="t9" points="-25,17 -23.800,16.200 -24.500,15.800"/>
                        <polygon class="t9" points="55,-20.800 56,-21.200 55.500,-21.600"/>
                        <polygon class="t9" points="57,-20 58,-20.300 57.500,-20.600"/>
                        <polygon class="t9" points="43,-11.600 44,-12.200 43.500,-12.600"/>
                        <polygon class="t9" points="92.500,13.500 93,11.500 92.700,12"/>
                        <polygon class="t-none" points="68.800,-49 70.300,-49.200 69.500,-49.700"/>
                        <polygon class="t-none" points="-172.500,-13.700 -171,-14 -172,-14.300"/>
                        <polygon class="t-none" points="-150,-17.400 -149.200,-17.700 -149.800,-18"/>
                        <polygon class="t-none" points="-177,-43.700 -176,-44 -176.800,-44.300"/>
                    </g>
                    </g>
                    <!-- Lakes -->
                    <g class="lakes" transform="scale(1 -1)">
                        <polygon points="-92,47 -88,48.800 -85,47.500 -87,46.500"/>
                        <polygon points="-87.800,41.800 -86.500,42 -85.500,45.500 -87,45"/>
                        <polygon points="-84,45.800 -81,45.800 -80.500,44 -82,43.300"/>
                        <polygon points="-83,41.600 -79,42.800 -79,42.400 -82,41.400"/>
                        <polygon points="-79.500,43.300 -76.500,44 -76.500,43.500 -79,43.200"/>
                        <polygon points="-122,64 -118,65.500 -119,64.500 -123,63.500"/>
                        <polygon points="-116,61.500 -110,62.800 -112,61.500 -116,61"/>
                        <polygon points="-99.500,53 -97,53.500 -97,50.500 -98,50.700"/>
                        <polygon points="103.500,51.800 105,52 110,55.600 109,55.800"/>
                        <polygon points="74,46 78,46.800 74.500,45.500"/>
                        <polygon points="31,60 32.500,61 31.500,61.200"/>
                        <polygon points="35,61.500 36,62.300 35.500,62.500"/>
                        <polygon points="31.800,-.5 33.500,-.5 33.500,-2.500 32,-2.500"/>
                        <polygon points="29.200,-3.500 29.600,-3.500 31,-8.200 30.500,-8.200"/>
                        <polygon points="34,-10 34.500,-10 35,-14 34.500,-14"/>
                    </g>
                </svg>

                <!-- Colour bar -->
                <defs>
                    <linearGradient id="temp-scale" x1="0" y1="1" x2="0" y2="0">
                        <stop offset="0" stop-color="#fff3b0"/>
                        <stop offset=".25" stop-color="#ffd93d"/>
                        <stop offset=".5" stop-color="#ff8c42"/>
                        <stop offset=".75" stop-color="#ff6b35"/>
                        <stop offset="1" stop-color="#c8401a"/>
                    </linearGradient>
                </defs>
                <text class="bar-title" x="2569" y="532">temperature_celsius</text>
                <rect x="2568" y="548" width="60" height="637" fill="url(#temp-scale)"/>
                <g class="tick">
                    <text x="2634" y="663">30</text>
                    <text x="2634" y="778">25</text>
                    <text x="2634" y="892">20</text>
                    <text x="2634" y="1006">15</text>
                    <text x="2634" y="1121">10</text>
                </g>
            </svg>
        </section>

        <div class="chart-row">
            <section class="card">
                <h2 class="card-head head-small head-trend">
                    <svg class="emoji-small" viewBox="0 0 28 32">
                        <rect width="28" height="32" fill="#c5d3de"/>
                        <path d="M2 28 8 18 15 20 23 10 27 1" class="trend-line"/>
                    </svg>
                    Climate Trends Over Time
                </h2>
                <svg class="plot-chart" viewBox="24 1562 1422 350">
                    <text class="plot-title" x="123" y="1634" textLength="597">Temperature (°C) Trend Over Time</text>
                    <g class="grid">
                        <path d="M144.500 1673V1912M343 1673V1912M544 1673V1912M746 1673V1912M942 1673V1912M1143 1673V1912M1344 1673V1912"/>
                        <path class="grid-h" d="M144 1758H1414M144 1872H1414"/>
                    </g>
                    <g class="tick tick-end">
                        <text x="136" y="1767">26</text>
                        <text x="136" y="1881">24</text>
                    </g>
                    <text class="axis-title axis-end" transform="translate(84 1873) rotate(-90)">Temperature (°C)</text>
                    <polyline class="trend" points="210,1813 277,1737 343,1719 410,1713 479,1819 524,1925"/>
                    <polyline class="trend" points="1000,1925 1008,1908 1076,1827 1142,1788 1210,1841 1278,1897 1283,1925"/>
                    <g class="trend-dot">
                        <circle cx="210" cy="1813" r="6"/><circle cx="277" cy="1737" r="6"/><circle cx="343" cy="1719" r="6"/><circle cx="410" cy="1713" r="6"/><circle cx="479" cy="1819" r="6"/>
                        <circle cx="1008" cy="1908" r="6"/><circle cx="1076" cy="1827" r="6"/><circle cx="1142" cy="1788" r="6"/><circle cx="1210" cy="1841" r="6"/><circle cx="1278" cy="1897" r="6"/>
                    </g>
                </svg>
            </section>

            <section class="card">
                <h2 class="card-head head-small head-air">
                    <svg class="emoji-small" viewBox="0 0 32 30">
                        <path d="M3 28C1 18 2 6 8 3C13 1 15 8 11 12C9 16 14 15 15 19C15 24 9 28 3 28Z" fill="#f3e7f2"/>
                        <path d="M6 22C7 16 5 12 9 7" fill="none" stroke="#b9a4c6" stroke-width="2"/>
                        <path d="M22 14 28 18 25 26 20 23Z" fill="#a5cfd3"/>
                    </svg>
                    Air Quality Index
                </h2>
                <svg class="plot-chart" viewBox="1494 1562 1422 350">
                    <text class="plot-title" x="1594" y="1634" textLength="677">Air Quality Distribution (Composite Index)</text>
                    <g class="grid">
                        <path d="M1762 1673V1912M2012 1673V1912M2261 1673V1912M2510 1673V1912M2759 1673V1912"/>
                        <path class="grid-h" d="M1638 1770H2884M1638 1906H2884"/>
                    </g>
                    <g class="tick tick-end">
                        <text x="1635" y="1779">2000</text>
                        <text x="1635" y="1915">1500</text>
                    </g>
                    <text class="axis-title axis-end" transform="translate(1556 1850) rotate(-90)">Number of Locations</text>
                    <rect x="2411" y="1706" width="198" height="220" fill="#ff0000"/>
                    <text class="bar-label" x="2510" y="1738">2235</text>
                    <text class="bar-label" x="2510" y="1769">(44.7%)</text>
                </svg>
            </section>
        </div>
    </div>

    <!-- Collapsed side panel -->
    <div class="side-tab">
        <svg viewBox="0 0 48 48"><circle cx="24" cy="24" r="22"/><path d="M23 14 12 24 23 34M36 14 25 24 36 34"/></svg>
    </div>

</body>
</html>
```

FILE: styles.css
```css
* {
    box-sizing: border-box;
}
body {
    margin: 0;
    width: 2940px;
    height: 1912px;
    overflow: hidden;
    background: #fcfcfc;
    font-family: Inter, "Liberation Sans", sans-serif;
}

/* Menu bar */
.menubar {
    height: 74px;
    background: #000;
    display: flex;
    align-items: center;
    justify-content: flex-end;
    padding: 0 26px 10px 0;
}
.menu-dot {
    width: 12px;
    height: 12px;
    border-radius: 50%;
    background: #6366f1;
}

/* Tabs */
.browser-top {
    background: #182132;
}
.tabstrip {
    height: 82px;
    display: flex;
    align-items: flex-end;
}
.lights {
    display: flex;
    gap: 16px;
    padding: 0 0 29px 26px;
    width: 157px;
}
.light {
    width: 24px;
    height: 24px;
    border-radius: 50%;
}
.red { background: #ff5f57; }
.grey { background: #414a5b; }
.green { background: #28c840; }
.tab {
    position: relative;
    width: 463px;
    height: 68px;
    background: #333c4d;
    border-radius: 20px 20px 0 0;
    display: flex;
    align-items: center;
    padding: 0 22px 12px 16px;
}
.tab::before,
.tab::after {
    content: "";
    position: absolute;
    bottom: 0;
    width: 20px;
    height: 20px;
}
.tab::before {
    left: -20px;
    background: radial-gradient(circle at 0 0, #182132 20px, #333c4d 20.5px);
}
.tab::after {
    right: -20px;
    background: radial-gradient(circle at 100% 0, #182132 20px, #333c4d 20.5px);
}
.favicon {
    width: 32px;
    height: 32px;
    flex: none;
}
.tab-title {
    width: 332px;
    flex: none;
    margin-left: 15px;
    white-space: nowrap;
    overflow: hidden;
    font-size: 24px;
    letter-spacing: -0.1px;
    color: #dfe3ea;
    -webkit-mask-image: linear-gradient(to right, #000 90%, transparent 100%);
    mask-image: linear-gradient(to right, #000 90%, transparent 100%);
}
.tab-close {
    width: 16px;
    height: 16px;
    margin-left: 28px;
    fill: none;
    stroke: #dfe3ea;
    stroke-width: 2.5;
}
.new-tab {
    width: 22px;
    height: 22px;
    margin: 0 0 32px 29px;
    fill: none;
    stroke: #c8ccd6;
    stroke-width: 2.5;
}
.tab-menu {
    width: 56px;
    height: 56px;
    margin: 0 12px 12px auto;
    border-radius: 20px;
    background: #333c4d;
    display: flex;
    align-items: center;
    justify-content: center;
}
.tab-menu svg {
    width: 18px;
    height: 12px;
    fill: none;
    stroke: #e0e4ec;
    stroke-width: 3;
}

/* Toolbar */
.toolbar {
    height: 94px;
    background: #333c4d;
    border-radius: 16px 16px 0 0;
    display: flex;
    align-items: center;
    padding: 0 0 2px 30px;
    border-bottom: 2px solid #444c5a;
}
.nav-icon {
    width: 28px;
    height: 28px;
    margin-right: 44px;
    fill: none;
    stroke: #c7ccd6;
    stroke-width: 2.500;
}
.nav-icon.dim {
    stroke: #767e8d;
}
.omnibox {
    width: 2423px;
    height: 68px;
    margin-left: -6px;
    padding: 0 0 0 10px;
    border-radius: 34px;
    background: #1c2535;
    display: flex;
    align-items: center;
}
.site-chip {
    width: 48px;
    height: 48px;
    border-radius: 50%;
    background: #333c4d;
    display: flex;
    align-items: center;
    justify-content: center;
}
.site-chip svg {
    width: 28px;
    height: 28px;
    fill: none;
    stroke: #e0e4ec;
    stroke-width: 2.500;
}
.i-dot {
    fill: #e0e4ec;
    stroke: none;
}
.url {
    margin-left: 15px;
    font-size: 30px;
    color: #e0e4ec;
}
.star {
    width: 32px;
    height: 32px;
    margin-left: auto;
    margin-right: 31px;
    fill: none;
    stroke: #d0d4dc;
    stroke-width: 2.500;
}
.puzzle {
    width: 34px;
    height: 34px;
    margin-left: 36px;
    fill: none;
    stroke: #c9ced8;
    stroke-width: 3;
}
.divider {
    width: 2px;
    height: 34px;
    margin-left: 35px;
    background: #5a6271;
}
.avatar {
    width: 42px;
    height: 42px;
    margin-left: 33px;
    border-radius: 50%;
    background: #4c27aa;
    color: #f0ecfa;
    font-size: 22px;
    display: flex;
    align-items: center;
    justify-content: center;
}
.kebab {
    margin-left: 47px;
    display: flex;
    flex-direction: column;
    gap: 5px;
}
.kebab i {
    width: 6px;
    height: 6px;
    border-radius: 50%;
    background: #c9ced8;
}

/* Page */
.page {
    height: 1662px;
    padding: 34px 24px 0;
    background: linear-gradient(#e9e9e9, rgba(233, 233, 233, 0) 34px);
}
.card {
    background: #fff;
    border-radius: 12px;
    box-shadow: 0 4px 32px rgba(0, 0, 0, 0.1);
}
.card-head {
    margin: 0;
    height: 80px;
    padding-left: 32px;
    display: flex;
    align-items: center;
    gap: 9px;
    border-radius: 12px 12px 0 0;
    color: #fff;
    font-size: 40px;
    font-weight: 700;
    letter-spacing: -0.75px;
}
.head-map {
    background: linear-gradient(135deg, #667eea, #764ba2);
}
.head-small {
    height: 70px;
    font-size: 32px;
    letter-spacing: -0.15px;
    padding-left: 34px;
    gap: 10px;
}
.head-trend {
    background: linear-gradient(135deg, #ffecd2, #fcb69f);
}
.head-air {
    background: linear-gradient(135deg, #a8edea, #fed6e3);
}
.emoji {
    width: 40px;
    height: 36px;
    flex: none;
}
.emoji-small {
    width: 28px;
    height: 32px;
    flex: none;
}
.trend-line {
    fill: none;
    stroke: #b3121f;
    stroke-width: 3;
}
.plot-map {
    display: block;
    width: 2892px;
    height: 1080px;
    border-radius: 0 0 12px 12px;
}
.plot-chart {
    display: block;
    width: 1422px;
    height: 350px;
}
.chart-row {
    display: grid;
    grid-template-columns: 1422px 1422px;
    gap: 48px;
    margin-top: 48px;
}

/* Plot contents */
text {
    font-family: "DejaVu Sans", Verdana, sans-serif;
    fill: #000;
}
.plot-title {
    font-size: 34px;
}
.bar-title {
    font-size: 28px;
}
.tick text {
    font-size: 24px;
}
.tick-end text {
    text-anchor: end;
}
.axis-title {
    font-size: 28px;
}
.axis-end {
    text-anchor: end;
}
.bar-label {
    font-size: 23px;
    font-weight: 700;
    fill: #fff;
    text-anchor: middle;
}
.mode-off {
    fill: #c4c4c4;
}
.mode-on {
    fill: #7a7a7a;
}
.mode-line {
    fill: none;
    stroke: #c4c4c4;
    stroke-width: 3;
}
.mode-thick {
    stroke-width: 5;
}
.geo polygon {
    stroke: #444;
    stroke-width: 0.5;
    stroke-linejoin: round;
}
.lakes polygon {
    fill: #fff;
    stroke: none;
}
.t-none { fill: #e5ecf6; }
.t1 { fill: #fff2ac; }
.t2 { fill: #ffeb92; }
.t3 { fill: #ffe060; }
.t4 { fill: #ffd93d; }
.t5 { fill: #ffd03f; }
.t6 { fill: #ffb83f; }
.t7 { fill: #ffa23e; }
.t8 { fill: #ff8f3c; }
.t9 { fill: #ff7d39; }
.t10 { fill: #ff6f34; }
.t11 { fill: #f05f2b; }
.t12 { fill: #e25526; }
.t13 { fill: #c8421c; }
.grid path {
    fill: none;
    stroke: #ececf0;
    stroke-width: 1.500;
}
.grid .grid-h {
    stroke-width: 3;
}
.trend {
    fill: none;
    stroke: #2e86ab;
    stroke-width: 4;
}
.trend-dot circle {
    fill: #2e86ab;
}

/* Side panel tab */
.side-tab {
    position: fixed;
    left: 2847px;
    top: 1790px;
    width: 110px;
    height: 140px;
    background: #f5f5fb;
    border: 2px solid #e2e2ef;
    border-radius: 14px;
    padding: 38px 0 0 21px;
}
.side-tab svg {
    display: block;
    width: 48px;
    height: 48px;
    fill: none;
    stroke: #7446c0;
    stroke-width: 3.500;
}
```
